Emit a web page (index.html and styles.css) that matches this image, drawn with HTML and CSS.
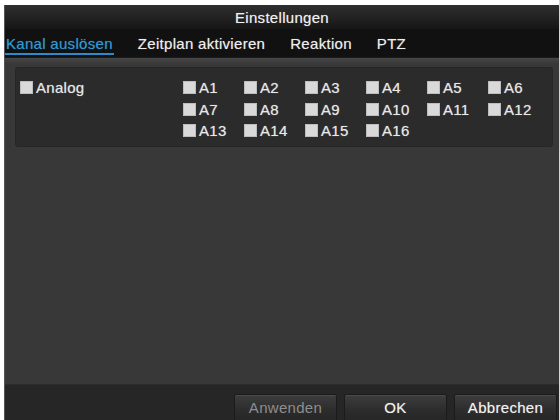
FILE: index.html
```html
<!DOCTYPE html>
<html lang="de">
<head>
<meta charset="utf-8">
<title>Einstellungen</title>
<link rel="stylesheet" href="styles.css">
</head>
<body>
<div class="window">
  <div class="titlebar">Einstellungen</div>
  <div class="tabs">
    <span class="tab active">Kanal auslösen</span>
    <span class="tab">Zeitplan aktivieren</span>
    <span class="tab">Reaktion</span>
    <span class="tab">PTZ</span>
  </div>
  <div class="content">
    <div class="panel">
      <label class="item analog"><span class="box"></span>Analog</label>
      <div class="grid">
        <label class="item"><span class="box"></span>A1</label>
        <label class="item"><span class="box"></span>A2</label>
        <label class="item"><span class="box"></span>A3</label>
        <label class="item"><span class="box"></span>A4</label>
        <label class="item"><span class="box"></span>A5</label>
        <label class="item"><span class="box"></span>A6</label>
        <label class="item"><span class="box"></span>A7</label>
        <label class="item"><span class="box"></span>A8</label>
        <label class="item"><span class="box"></span>A9</label>
        <label class="item"><span class="box"></span>A10</label>
        <label class="item"><span class="box"></span>A11</label>
        <label class="item"><span class="box"></span>A12</label>
        <label class="item"><span class="box"></span>A13</label>
        <label class="item"><span class="box"></span>A14</label>
        <label class="item"><span class="box"></span>A15</label>
        <label class="item"><span class="box"></span>A16</label>
      </div>
    </div>
  </div>
  <div class="footer">
    <button class="btn disabled">Anwenden</button>
    <button class="btn">OK</button>
    <button class="btn">Abbrechen</button>
  </div>
</div>
</body>
</html>
```
FILE: styles.css
```css
html, body {
  margin: 0;
  padding: 0;
  background: #ffffff;
}
body {
  padding: 5px 0 0 4px;
  font-family: "Liberation Sans", Arial, sans-serif;
  font-size: 15px;
  letter-spacing: 0.3px;
  color: #e8e8e8;
}
.window {
  width: 555px;
  height: 415px;
  display: flex;
  flex-direction: column;
  background: #383838;
  border-left: 1px solid #555555;
  box-sizing: border-box;
  overflow: hidden;
}
.titlebar {
  height: 24px;
  flex: none;
  display: flex;
  align-items: center;
  justify-content: center;
  background: linear-gradient(#2f2f2f, #161616);
  color: #f0f0f0;
  text-shadow: 0 0 1px rgba(255,255,255,0.45);
}
.tabs {
  height: 29px;
  flex: none;
  display: flex;
  align-items: flex-start;
  gap: 23px;
  padding: 6px 0 0 0;
  box-sizing: border-box;
  background: #111111;
  border-bottom: 1px solid #1a1a1a;
}
.tab {
  height: 18px;
  line-height: 18px;
  padding: 0 1px;
  color: #eeeeee;
  text-shadow: 0 0 1px rgba(255,255,255,0.45);
}
.tab.active {
  color: #2f9ad6;
  text-shadow: 0 0 1px rgba(47,154,214,0.5);
  border-bottom: 2px solid #2a8ccc;
}
.content {
  flex: 1;
  padding: 9px 6px 0 10px;
  background: linear-gradient(#474747, #383838 6px);
}
.panel {
  height: 80px;
  box-sizing: border-box;
  display: flex;
  align-items: flex-start;
  padding: 12px 0 0 4px;
  background: #2b2b2b;
  border: 1px solid #262626;
  border-radius: 3px;
}
.item {
  display: flex;
  align-items: center;
  gap: 3px;
  height: 15px;
  line-height: 15px;
  color: #e8e8e8;
  text-shadow: 0 0 1px rgba(255,255,255,0.5);
  white-space: nowrap;
}
.analog {
  width: 163px;
  flex: none;
}
.box {
  width: 13px;
  height: 13px;
  flex: none;
  background: #d9d9d9;
  box-shadow: inset 0 0 0 1px #bdbdbd;
}
.grid {
  display: grid;
  grid-template-columns: repeat(6, 61px);
  row-gap: 6.5px;
}
.footer {
  height: 36px;
  flex: none;
  display: flex;
  justify-content: flex-end;
  align-items: flex-start;
  gap: 7px;
  padding: 9px 2px 0 0;
  box-sizing: border-box;
  background: #262626;
  border-top: 1px solid #2c2c2c;
}
.btn {
  width: 103px;
  height: 28px;
  margin: 0;
  padding: 0 0 2px 0;
  font-family: "Liberation Sans", Arial, sans-serif;
  font-size: 15px;
  letter-spacing: 0.3px;
  color: #f0f0f0;
  text-shadow: 0 0 1px rgba(255,255,255,0.45);
  background: linear-gradient(#3d3d3d, #2c2c2c 60%, #262626);
  border: 1px solid #1b1b1b;
  border-radius: 2px;
  box-shadow: inset 0 1px 0 #4a4a4a;
}
.btn.disabled {
  color: #8e8e8e;
  text-shadow: none;
}
```
